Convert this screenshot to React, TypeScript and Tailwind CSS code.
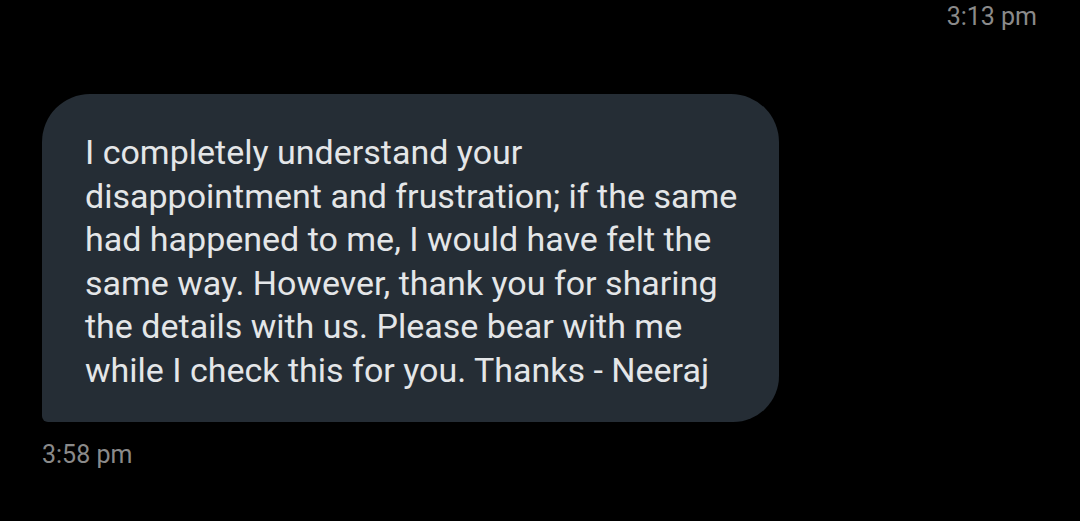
export default function App() {
  const lines = [
    "I completely understand your",
    "disappointment and frustration; if the same",
    "had happened to me, I would have felt the",
    "same way. However, thank you for sharing",
    "the details with us. Please bear with me",
    "while I check this for you. Thanks - Neeraj",
  ];

  return (
    <div className="h-[521px] w-[1080px] bg-black overflow-hidden">
      <div className="flex justify-end pr-[43px] pt-[2px]">
        <span className="text-[25px] leading-[30px] text-[#8a8a8a] font-['Roboto',sans-serif]">
          3:13 pm
        </span>
      </div>

      <div className="pl-[42px] pt-[62px]">
        <div className="w-[737px] h-[328px] bg-[#252d35] rounded-tl-[48px] rounded-tr-[48px] rounded-br-[46px] rounded-bl-[6px] pl-[43px] pt-[37px]">
          <div className="text-[34px] leading-[43.6px] text-[#e4e6e8] font-['Roboto',sans-serif]">
            {lines.map((l, i) => (
              <div key={i}>{l}</div>
            ))}
          </div>
        </div>
      </div>

      <div className="pl-[42px] pt-[18px]">
        <span className="text-[25px] leading-[30px] text-[#8a8a8a] font-['Roboto',sans-serif]">
          3:58 pm
        </span>
      </div>
    </div>
  );
}
